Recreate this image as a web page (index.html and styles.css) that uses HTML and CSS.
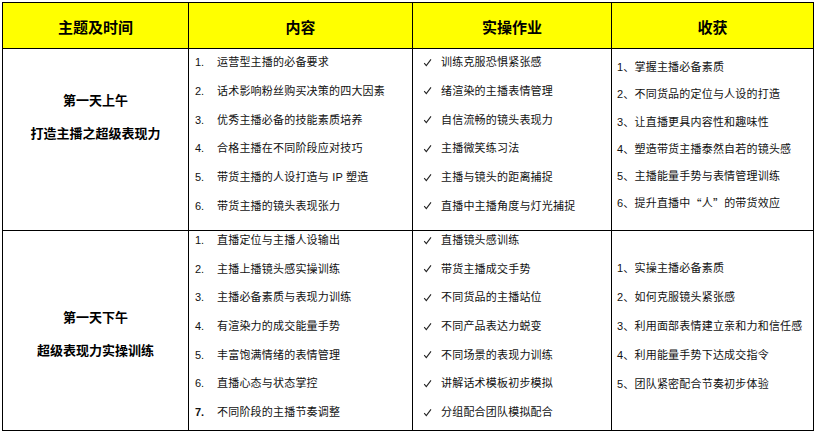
FILE: index.html
```html
<!DOCTYPE html>
<html lang="zh-CN">
<head>
<meta charset="utf-8">
<title>课程安排</title>
<link rel="stylesheet" href="styles.css">
</head>
<body>
<div class="table">
  <div class="cell head">主题及时间</div>
  <div class="cell head">内容</div>
  <div class="cell head">实操作业</div>
  <div class="cell head">收获</div>

  <div class="cell topic topic-am">
    <p>第一天上午</p>
    <p>打造主播之超级表现力</p>
  </div>
  <div class="cell">
    <ol class="list list-a">
      <li><span class="num">1.</span>运营型主播的必备要求</li>
      <li><span class="num">2.</span>话术影响粉丝购买决策的四大因素</li>
      <li><span class="num">3.</span>优秀主播必备的技能素质培养</li>
      <li><span class="num">4.</span>合格主播在不同阶段应对技巧</li>
      <li><span class="num">5.</span>带货主播的人设打造与 IP 塑造</li>
      <li><span class="num">6.</span>带货主播的镜头表现张力</li>
    </ol>
  </div>
  <div class="cell practice">
    <ul class="list list-a">
      <li><span class="chk"><svg viewBox="0 0 9 9" width="9" height="9"><path d="M1.2 5.2 L3.3 7.6 L8 1.4" /></svg></span>训练克服恐惧紧张感</li>
      <li><span class="chk"><svg viewBox="0 0 9 9" width="9" height="9"><path d="M1.2 5.2 L3.3 7.6 L8 1.4" /></svg></span>绪渲染的主播表情管理</li>
      <li><span class="chk"><svg viewBox="0 0 9 9" width="9" height="9"><path d="M1.2 5.2 L3.3 7.6 L8 1.4" /></svg></span>自信流畅的镜头表现力</li>
      <li><span class="chk"><svg viewBox="0 0 9 9" width="9" height="9"><path d="M1.2 5.2 L3.3 7.6 L8 1.4" /></svg></span>主播微笑练习法</li>
      <li><span class="chk"><svg viewBox="0 0 9 9" width="9" height="9"><path d="M1.2 5.2 L3.3 7.6 L8 1.4" /></svg></span>主播与镜头的距离捕捉</li>
      <li><span class="chk"><svg viewBox="0 0 9 9" width="9" height="9"><path d="M1.2 5.2 L3.3 7.6 L8 1.4" /></svg></span>直播中主播角度与灯光捕捉</li>
    </ul>
  </div>
  <div class="cell gains">
    <ul class="list gain-a">
      <li>1、掌握主播必备素质</li>
      <li>2、不同货品的定位与人设的打造</li>
      <li>3、让直播更具内容性和趣味性</li>
      <li>4、塑造带货主播泰然自若的镜头感</li>
      <li>5、主播能量手势与表情管理训练</li>
      <li>6、提升直播中<span class="q">“</span>人<span class="q">”</span>的带货效应</li>
    </ul>
  </div>

  <div class="cell topic topic-pm">
    <p>第一天下午</p>
    <p>超级表现力实操训练</p>
  </div>
  <div class="cell">
    <ol class="list list-b">
      <li><span class="num">1.</span>直播定位与主播人设输出</li>
      <li><span class="num">2.</span>主播上播镜头感实操训练</li>
      <li><span class="num">3.</span>主播必备素质与表现力训练</li>
      <li><span class="num">4.</span>有渲染力的成交能量手势</li>
      <li><span class="num">5.</span>丰富饱满情绪的表情管理</li>
      <li><span class="num">6.</span>直播心态与状态掌控</li>
      <li><span class="num num-bold">7.</span>不同阶段的主播节奏调整</li>
    </ol>
  </div>
  <div class="cell practice">
    <ul class="list list-b">
      <li><span class="chk"><svg viewBox="0 0 9 9" width="9" height="9"><path d="M1.2 5.2 L3.3 7.6 L8 1.4" /></svg></span>直播镜头感训练</li>
      <li><span class="chk"><svg viewBox="0 0 9 9" width="9" height="9"><path d="M1.2 5.2 L3.3 7.6 L8 1.4" /></svg></span>带货主播成交手势</li>
      <li><span class="chk"><svg viewBox="0 0 9 9" width="9" height="9"><path d="M1.2 5.2 L3.3 7.6 L8 1.4" /></svg></span>不同货品的主播站位</li>
      <li><span class="chk"><svg viewBox="0 0 9 9" width="9" height="9"><path d="M1.2 5.2 L3.3 7.6 L8 1.4" /></svg></span>不同产品表达力蜕变</li>
      <li><span class="chk"><svg viewBox="0 0 9 9" width="9" height="9"><path d="M1.2 5.2 L3.3 7.6 L8 1.4" /></svg></span>不同场景的表现力训练</li>
      <li><span class="chk"><svg viewBox="0 0 9 9" width="9" height="9"><path d="M1.2 5.2 L3.3 7.6 L8 1.4" /></svg></span>讲解话术模板初步模拟</li>
      <li><span class="chk"><svg viewBox="0 0 9 9" width="9" height="9"><path d="M1.2 5.2 L3.3 7.6 L8 1.4" /></svg></span>分组配合团队模拟配合</li>
    </ul>
  </div>
  <div class="cell gains">
    <ul class="list gain-b">
      <li>1、实操主播必备素质</li>
      <li>2、如何克服镜头紧张感</li>
      <li>3、利用面部表情建立亲和力和信任感</li>
      <li>4、利用能量手势下达成交指令</li>
      <li>5、团队紧密配合节奏初步体验</li>
    </ul>
  </div>
</div>
</body>
</html>
```

FILE: styles.css
```css
html, body {
  margin: 0;
  padding: 0;
  background: #fff;
}

body {
  font-family: "Liberation Sans", "Noto Sans CJK SC", sans-serif;
  color: #111;
}

.table {
  display: grid;
  grid-template-columns: 186px 224px 199px 202px;
  grid-template-rows: 46px 182px 200px;
  width: max-content;
  margin: 2px 0 0 2px;
  border-left: 1px solid #000;
  border-top: 1px solid #000;
}

.cell {
  box-sizing: border-box;
  border-right: 1px solid #000;
  border-bottom: 1px solid #000;
  min-width: 0;
}

.head {
  background: #ffff00;
  display: flex;
  align-items: center;
  justify-content: center;
  font-family: "Noto Sans CJK SC", sans-serif;
  font-weight: 700;
  font-size: 15px;
  color: #000;
  padding-top: 1px;
}

.topic {
  display: flex;
  flex-direction: column;
  align-items: center;
  gap: 15px;
  font-family: "Noto Sans CJK SC", sans-serif;
  font-weight: 700;
  font-size: 13px;
  color: #000;
}

.topic p {
  margin: 0;
  line-height: 18px;
}

.topic-am {
  padding-top: 42px;
}

.topic-pm {
  padding-top: 77px;
}

.list {
  list-style: none;
  margin: 0;
  padding: 0;
  display: flex;
  flex-direction: column;
  font-size: 11px;
  letter-spacing: 0.2px;
}

.list li {
  display: flex;
  align-items: center;
  line-height: 18px;
  height: 18px;
  white-space: nowrap;
}

.num {
  display: inline-block;
  width: 22px;
  flex: none;
  letter-spacing: 0;
}

.num-bold {
  font-weight: 700;
}

.chk {
  display: inline-flex;
  width: 18px;
  flex: none;
  align-items: center;
}

.chk svg {
  display: block;
  fill: none;
  stroke: #222;
  stroke-width: 1.1;
}

.q {
  font-family: "Noto Sans CJK SC", sans-serif;
}

.list-a {
  padding: 4px 0 0 6px;
  gap: 10.8px;
}

.list-b {
  padding: 0 0 0 6px;
  gap: 10.7px;
}

.practice .list {
  padding-left: 10px;
}

.gain-a {
  padding: 9px 0 0 5px;
  gap: 9.3px;
}

.gain-b {
  padding: 28px 0 0 5px;
  gap: 11px;
}
```
